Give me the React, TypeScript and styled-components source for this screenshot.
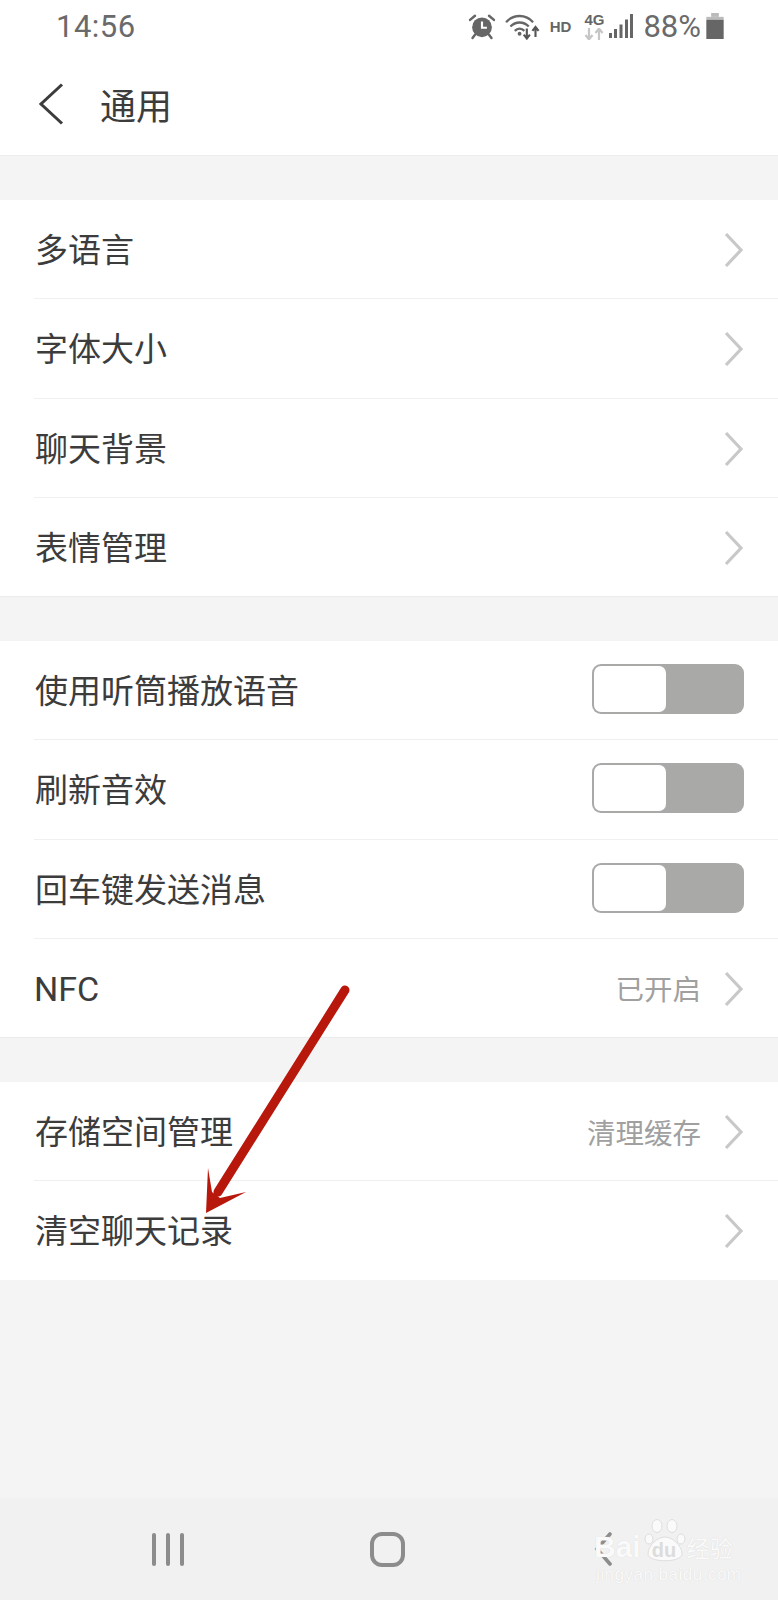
import styled, { createGlobalStyle } from "styled-components";

const GlobalStyle = createGlobalStyle`
	html, body {
		margin: 0;
		padding: 0;
		background: #f4f4f4;
	}
`;

const CJK = `Roboto, "Noto Sans CJK SC", "Noto Sans", sans-serif`;

type Row = { label: string; value?: string; toggle?: boolean; latin?: boolean };

const groups: Row[][] = [
	[{ label: "多语言" }, { label: "字体大小" }, { label: "聊天背景" }, { label: "表情管理" }],
	[
		{ label: "使用听筒播放语音", toggle: true },
		{ label: "刷新音效", toggle: true },
		{ label: "回车键发送消息", toggle: true },
		{ label: "NFC", value: "已开启", latin: true },
	],
	[{ label: "存储空间管理", value: "清理缓存" }, { label: "清空聊天记录" }],
];

function Chevron() {
	return (
		<ChevronIcon width="20" height="36" viewBox="0 0 20 36">
			<path d="M2 2 L17 18 L2 34" fill="none" stroke="#c8c8c8" strokeWidth="3.2" />
		</ChevronIcon>
	);
}

function StatusIcons() {
	return (
		<StatusRight>
			<svg width="28" height="27" viewBox="0 0 34 32">
				<circle cx="17" cy="17" r="12" fill="#666" />
				<path d="M17 10 V17.5 H23" fill="none" stroke="#fff" strokeWidth="2.6" />
				<path d="M2.5 8 L8.5 3 M31.5 8 L25.5 3" stroke="#666" strokeWidth="3" strokeLinecap="round" />
				<path d="M8.5 26 L5.5 30 M25.5 26 L28.5 30" stroke="#666" strokeWidth="3" strokeLinecap="round" />
			</svg>
			<WifiIcon width="36" height="27" viewBox="0 0 36 28">
				<path d="M1.5 9.5 C9 1 22 1 29.5 9.5" fill="none" stroke="#666" strokeWidth="2.4" />
				<path d="M6 14 C11.5 8.5 19.5 8.5 25 14" fill="none" stroke="#666" strokeWidth="2.4" />
				<path d="M10.5 18.5 C13.5 15.5 17.5 15.5 20.5 18.5" fill="none" stroke="#666" strokeWidth="2.4" />
				<circle cx="15.5" cy="21.5" r="2" fill="#666" />
				<path d="M23 16 V26 M19.8 22.5 L23 26.5 L26.2 22.5" fill="none" stroke="#555" strokeWidth="2.2" />
				<path d="M32 25 V15 M28.8 18.5 L32 14.5 L35.2 18.5" fill="none" stroke="#555" strokeWidth="2.2" />
			</WifiIcon>
			<HdLabel>HD</HdLabel>
			<NetStack>
				<NetLabel>4G</NetLabel>
				<svg width="20" height="12" viewBox="0 0 20 12">
					<path d="M5 0 V11 M1.5 7 L5 11.5 L8.5 7" fill="none" stroke="#c6c6c6" strokeWidth="2.2" />
					<path d="M15 12 V1 M11.5 5 L15 0.5 L18.5 5" fill="none" stroke="#c6c6c6" strokeWidth="2.2" />
				</svg>
			</NetStack>
			<SignalIcon width="24" height="24" viewBox="0 0 24 24">
				<rect x="0" y="19" width="3" height="5" fill="#666" />
				<rect x="5" y="15" width="3" height="9" fill="#666" />
				<rect x="10.5" y="10.5" width="3" height="13.5" fill="#666" />
				<rect x="16" y="5.5" width="3" height="18.5" fill="#666" />
				<rect x="21" y="0" width="3" height="24" fill="#666" />
			</SignalIcon>
			<Battery>88%</Battery>
			<svg width="18" height="26" viewBox="0 0 18 27">
				<rect x="5" y="0" width="8" height="4" fill="#bbb" />
				<rect x="0" y="4" width="18" height="3" fill="#bbb" />
				<rect x="0" y="7" width="18" height="20" fill="#666" />
			</svg>
		</StatusRight>
	);
}

export default function App() {
	return (
		<Screen>
			<GlobalStyle />
			<StatusBar>
				<Clock>14:56</Clock>
				<StatusIcons />
			</StatusBar>
			<Header>
				<svg width="26" height="42" viewBox="0 0 26 42">
					<path d="M24 1.5 L3 21 L24 40.5" fill="none" stroke="#3c3c3c" strokeWidth="3" />
				</svg>
				<Title>通用</Title>
			</Header>
			<Content>
				{groups.map((rows) => (
					<Group key={rows[0].label}>
						{rows.map((row) => (
							<ListRow key={row.label}>
								<RowLabel $latin={row.latin}>{row.label}</RowLabel>
								{row.value && <RowValue>{row.value}</RowValue>}
								{row.toggle ? (
									<Toggle>
										<Knob />
									</Toggle>
								) : (
									<Chevron />
								)}
							</ListRow>
						))}
					</Group>
				))}
			</Content>
			<NavBar>
				<MenuButton>
					<span />
					<span />
					<span />
				</MenuButton>
				<HomeButton />
				<svg width="18" height="34" viewBox="0 0 18 34">
					<path d="M16 2 L3 17 L16 32" fill="none" stroke="#8c8c8c" strokeWidth="3.6" strokeLinecap="round" />
				</svg>
			</NavBar>
			<Watermark>
				<WatermarkTop>
					<WatermarkBrand>Bai</WatermarkBrand>
					<PawMark>
						<svg width="42" height="44" viewBox="0 0 42 44">
							<ellipse cx="5" cy="20" rx="4" ry="5" fill="#fafafa" stroke="#dedede" strokeWidth="1" />
							<ellipse cx="13" cy="7" rx="5" ry="6.5" fill="#fafafa" stroke="#dedede" strokeWidth="1" />
							<ellipse cx="28" cy="7" rx="5" ry="6.5" fill="#fafafa" stroke="#dedede" strokeWidth="1" />
							<ellipse cx="37" cy="20" rx="4" ry="5" fill="#fafafa" stroke="#dedede" strokeWidth="1" />
							<path d="M4 35 C4 26 14 18 21 18 C28 18 38 26 38 35 C38 44 4 44 4 35 Z" fill="#fafafa" stroke="#dedede" strokeWidth="1" />
						</svg>
						<PawText>du</PawText>
					</PawMark>
					<WatermarkCn>经验</WatermarkCn>
				</WatermarkTop>
				<WatermarkUrl>jingyan.baidu.com</WatermarkUrl>
			</Watermark>
			<ArrowOverlay width="778" height="1600" viewBox="0 0 778 1600">
				<path d="M345 990 L218 1192" stroke="#b8170b" strokeWidth="9" strokeLinecap="round" fill="none" />
				<path d="M206 1213 L208 1168 L212 1192 L220 1198 L246 1192 Z" fill="#b8170b" />
			</ArrowOverlay>
		</Screen>
	);
}

const Screen = styled.div`
	position: relative;
	width: 778px;
	height: 1600px;
	display: flex;
	flex-direction: column;
	overflow: hidden;
	background: #f4f4f4;
	font-family: ${CJK};
`;

const StatusBar = styled.div`
	height: 52px;
	padding: 0 54px 0 56px;
	display: flex;
	align-items: center;
	justify-content: space-between;
	background: #fff;
`;

const Clock = styled.span`
	font-family: Roboto, sans-serif;
	font-size: 31px;
	color: #6a6a6a;
	letter-spacing: 0.5px;
`;

const StatusRight = styled.div`
	display: flex;
	align-items: center;
	gap: 6px;
`;

const WifiIcon = styled.svg`
	margin-left: 2px;
`;

const HdLabel = styled.span`
	font-family: "Liberation Sans", sans-serif;
	font-weight: 700;
	font-size: 15px;
	color: #666;
	margin: 0 7px 0 4px;
`;

const NetStack = styled.div`
	display: flex;
	flex-direction: column;
	align-items: center;
	gap: 2px;
`;

const NetLabel = styled.span`
	font-family: "Liberation Sans", sans-serif;
	font-weight: 700;
	font-size: 15px;
	line-height: 13px;
	color: #666;
`;

const SignalIcon = styled.svg`
	margin: 0 0 0 -1px;
`;

const Battery = styled.span`
	font-family: Roboto, sans-serif;
	font-size: 31px;
	color: #6a6a6a;
	margin: 0 -1px 0 4px;
`;

const Header = styled.header`
	height: 103px;
	padding: 0 0 0 38px;
	display: flex;
	align-items: center;
	gap: 36px;
	background: #fff;
	border-bottom: 1px solid #ececec;
`;

const Title = styled.h1`
	margin: 0;
	font-size: 36px;
	font-weight: 400;
	color: #3c3c3c;
`;

const Content = styled.main`
	flex: 1;
	padding-top: 44px;
	display: flex;
	flex-direction: column;
	gap: 44px;
`;

const Group = styled.section`
	background: #fff;
	border-bottom: 1px solid #ececec;

	&:last-child {
		border-bottom: none;
	}
`;

const ListRow = styled.div`
	box-sizing: border-box;
	height: 99.25px;
	margin-left: 34px;
	padding: 0 34px 2px 0;
	display: flex;
	align-items: center;
	border-bottom: 1px solid #f0f0f0;

	&:last-child {
		height: 98.25px;
		border-bottom: none;
	}
`;

const RowLabel = styled.span<{ $latin?: boolean }>`
	flex: 1;
	margin-left: ${(p) => (p.$latin ? "0" : "1px")};
	padding-top: ${(p) => (p.$latin ? "5px" : "0")};
	font-size: ${(p) => (p.$latin ? "34px" : "33px")};
	color: #3c3c3c;
`;

const RowValue = styled.span`
	margin: 2px 23px 0 0;
	font-size: 28.5px;
	color: #a0a0a0;
`;

const ChevronIcon = styled.svg`
	display: block;
	margin-top: 4px;
`;

const Toggle = styled.div`
	box-sizing: border-box;
	width: 152px;
	height: 50px;
	padding: 2px;
	background: #a9aaa8;
	border-radius: 9px;
`;

const Knob = styled.div`
	width: 72px;
	height: 46px;
	background: #fff;
	border-radius: 7px;
`;

const NavBar = styled.nav`
	box-sizing: border-box;
	height: 104px;
	padding: 0 166px 0 152px;
	display: flex;
	align-items: center;
	justify-content: space-between;
	background: #f1f1f1;
	border-top: 2px solid #f3f3f3;
`;

const MenuButton = styled.div`
	display: flex;
	gap: 10px;

	span {
		width: 4px;
		height: 33px;
		background: #8c8c8c;
		border-radius: 2px;
	}
`;

const HomeButton = styled.div`
	box-sizing: border-box;
	width: 35px;
	height: 35px;
	border: 4px solid #8c8c8c;
	border-radius: 12px;
	margin-right: 4px;
`;

const Watermark = styled.div`
	position: absolute;
	left: 594px;
	top: 1517px;
	width: 140px;
	display: flex;
	flex-direction: column;
	align-items: flex-start;
	color: #fafafa;
	text-shadow: 0 0 1px #d4d4d4;
	white-space: nowrap;
`;

const WatermarkTop = styled.div`
	display: flex;
	align-items: flex-end;
	height: 46px;
`;

const WatermarkBrand = styled.span`
	font-family: "Liberation Sans", sans-serif;
	font-size: 30px;
	font-weight: 700;
	line-height: 32px;
	margin-right: 3px;
`;

const PawMark = styled.div`
	position: relative;
	width: 42px;
	height: 44px;
`;

const PawText = styled.span`
	position: absolute;
	left: 8px;
	bottom: 2px;
	font-family: "Liberation Sans", sans-serif;
	font-size: 20px;
	font-weight: 700;
	line-height: 22px;
	color: #dcdcdc;
	text-shadow: none;
`;

const WatermarkCn = styled.span`
	margin-left: 1px;
	font-family: "Noto Sans CJK SC", sans-serif;
	font-size: 23px;
	line-height: 32px;
`;

const WatermarkUrl = styled.span`
	font-family: "Liberation Sans", sans-serif;
	font-size: 17px;
	line-height: 18px;
	letter-spacing: 0.5px;
	margin: 3px 0 0 2px;
`;

const ArrowOverlay = styled.svg`
	position: absolute;
	left: 0;
	top: 0;
	pointer-events: none;
`;
